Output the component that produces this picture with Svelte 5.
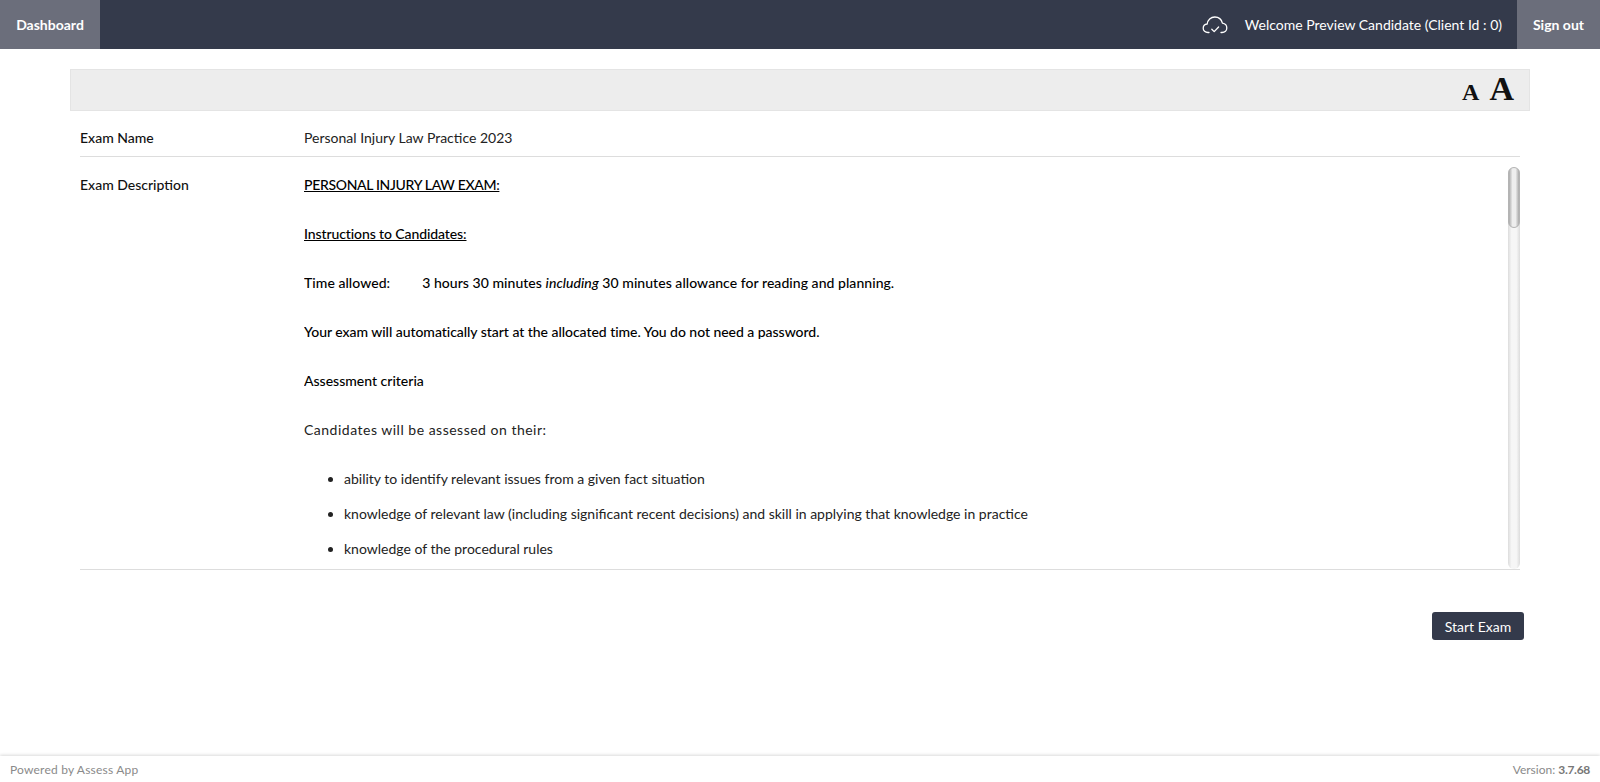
<script>
  let examName = 'Personal Injury Law Practice 2023';
  let criteria = [
    'ability to identify relevant issues from a given fact situation',
    'knowledge of relevant law (including significant recent decisions) and skill in applying that knowledge in practice',
    'knowledge of the procedural rules'
  ];
</script>

<div class="page">
  <header class="topbar">
    <a class="nav-btn" href="#dashboard">Dashboard</a>
    <div class="user">
      <svg class="cloud" width="26" height="20" viewBox="0 0 26 20" fill="none" stroke="#fff" stroke-width="1.3" stroke-linecap="round" stroke-linejoin="round">
        <path d="M7 17.5H6C3.2 17.5 1.2 15.6 1.2 13.2C1.2 10.9 3 9.2 5.2 9C5.6 4.9 8.8 2 12.8 2C16.6 2 19.6 4.6 20.4 8.2C23 8.6 24.8 10.6 24.8 13.1C24.8 15.6 22.8 17.5 20 17.5H19"/>
        <path d="M9.8 14.2L12.2 16.6L16.6 12"/>
      </svg>
      <span>Welcome Preview Candidate (Client Id : 0)</span>
    </div>
    <a class="nav-btn signout" href="#signout">Sign out</a>
  </header>

  <main class="content">
    <div class="toolbar">
      <button class="font-btn small">A</button>
      <button class="font-btn large">A</button>
    </div>

    <div class="row name-row">
      <div class="label">Exam Name</div>
      <div class="value">{examName}</div>
    </div>

    <div class="row desc-row">
      <div class="label">Exam Description</div>
      <div class="desc">
        <p class="strong title"><u>PERSONAL INJURY LAW EXAM:</u></p>
        <p class="strong sub"><u>Instructions to Candidates:</u></p>
        <p class="strong time">Time allowed:<span class="tab"></span>3 hours 30 minutes <em>including</em> 30 minutes allowance for reading and planning.</p>
        <p class="strong start-note">Your exam will automatically start at the allocated time. You do not need a password.</p>
        <p class="strong">Assessment criteria</p>
        <p class="intro">Candidates will be assessed on their:</p>
        <ul>
          {#each criteria as item}
            <li>{item}</li>
          {/each}
        </ul>
      </div>
      <div class="scrollbar">
        <div class="thumb"></div>
      </div>
    </div>

    <div class="actions">
      <button class="start">Start Exam</button>
    </div>
  </main>

  <footer class="footer">
    <span class="powered">Powered by Assess App</span>
    <span>Version: <b>3.7.68</b></span>
  </footer>
</div>

<style>
  :global(body) {
    margin: 0;
    background: #fff;
    font-family: Lato, "Liberation Sans", sans-serif;
    font-size: 14px;
    color: #222;
  }
  .page {
    height: 782px;
    display: flex;
    flex-direction: column;
    overflow: hidden;
  }
  .topbar {
    height: 49px;
    flex: none;
    display: flex;
    align-items: center;
    background: #343a4b;
    color: #fff;
  }
  .nav-btn {
    height: 100%;
    width: 100px;
    display: flex;
    align-items: center;
    justify-content: center;
    background: #6b6e7b;
    color: #fff;
    font-weight: 700;
    font-size: 14px;
    text-decoration: none;
  }
  .signout {
    width: 83px;
  }
  .user {
    margin-left: auto;
    display: flex;
    align-items: center;
    gap: 17px;
    padding-right: 15px;
    font-size: 14px;
  }
  .content {
    flex: 1;
    padding: 20px 70px 0;
  }
  .toolbar {
    box-sizing: border-box;
    height: 42px;
    border: 1px solid #e4e4e4;
    background: #ededed;
    display: flex;
    justify-content: flex-end;
    align-items: flex-end;
    gap: 10px;
    padding: 0 15px 6px 0;
  }
  .font-btn {
    border: 0;
    padding: 0;
    background: none;
    font-family: "Liberation Serif", serif;
    font-weight: 700;
    line-height: 1;
    color: #111;
  }
  .small { font-size: 24px; }
  .large {
    font-size: 34px;
    margin-bottom: -2px;
  }
  .row {
    display: flex;
    margin: 0 10px;
    border-bottom: 1px solid #ddd;
  }
  .name-row {
    box-sizing: border-box;
    height: 46px;
    padding-top: 7px;
    align-items: center;
  }
  .label {
    width: 224px;
    flex: none;
    color: #111;
    font-weight: 500;
  }
  .desc-row {
    box-sizing: border-box;
    height: 413px;
  }
  .desc-row .label {
    padding-top: 19px;
  }
  .value {
    color: #222;
  }
  .desc {
    flex: 1;
    min-width: 0;
    height: 403px;
    margin-top: 9px;
    padding-top: 8px;
    box-sizing: border-box;
    overflow: hidden;
  }
  .scrollbar {
    width: 12px;
    height: 402px;
    margin-top: 10px;
    flex: none;
    border-radius: 6px;
    background: linear-gradient(to right, #dcdcdc, #f6f6f6 30%, #f6f6f6 70%, #dcdcdc);
  }
  .thumb {
    box-sizing: border-box;
    height: 61px;
    border: 1px solid #b4b4b4;
    border-radius: 6px;
    background: linear-gradient(to right, #aaa, #eee 35%, #eee 65%, #aaa);
  }
  p {
    margin: 0 0 28px;
    line-height: 21px;
  }
  .strong {
    color: #000;
    font-weight: 500;
  }
  .title {
    letter-spacing: -0.32px;
  }
  .sub {
    letter-spacing: -0.1px;
  }
  .time {
    letter-spacing: 0.05px;
  }
  .start-note {
    letter-spacing: -0.04px;
  }
  .intro {
    color: #222;
    letter-spacing: 0.5px;
  }
  .tab {
    display: inline-block;
    width: 32px;
  }
  ul {
    margin: 0;
    padding-left: 40px;
    color: #222;
  }
  li {
    line-height: 21px;
    margin-bottom: 14px;
  }
  .actions {
    display: flex;
    justify-content: flex-end;
    padding: 42px 6px 0 0;
  }
  .start {
    width: 92px;
    height: 28px;
    border: 0;
    border-radius: 3px;
    background: #343a4b;
    color: #fff;
    font-family: inherit;
    font-size: 14px;
  }
  .footer {
    height: 26px;
    flex: none;
    display: flex;
    justify-content: space-between;
    align-items: center;
    padding: 0 10px;
    box-shadow: 0 -1px 3px rgba(0, 0, 0, 0.15);
    font-size: 12px;
    color: #8a8a8a;
  }
  .powered {
    letter-spacing: 0.2px;
  }
  .footer b {
    color: #777;
    letter-spacing: -0.3px;
  }
</style>
